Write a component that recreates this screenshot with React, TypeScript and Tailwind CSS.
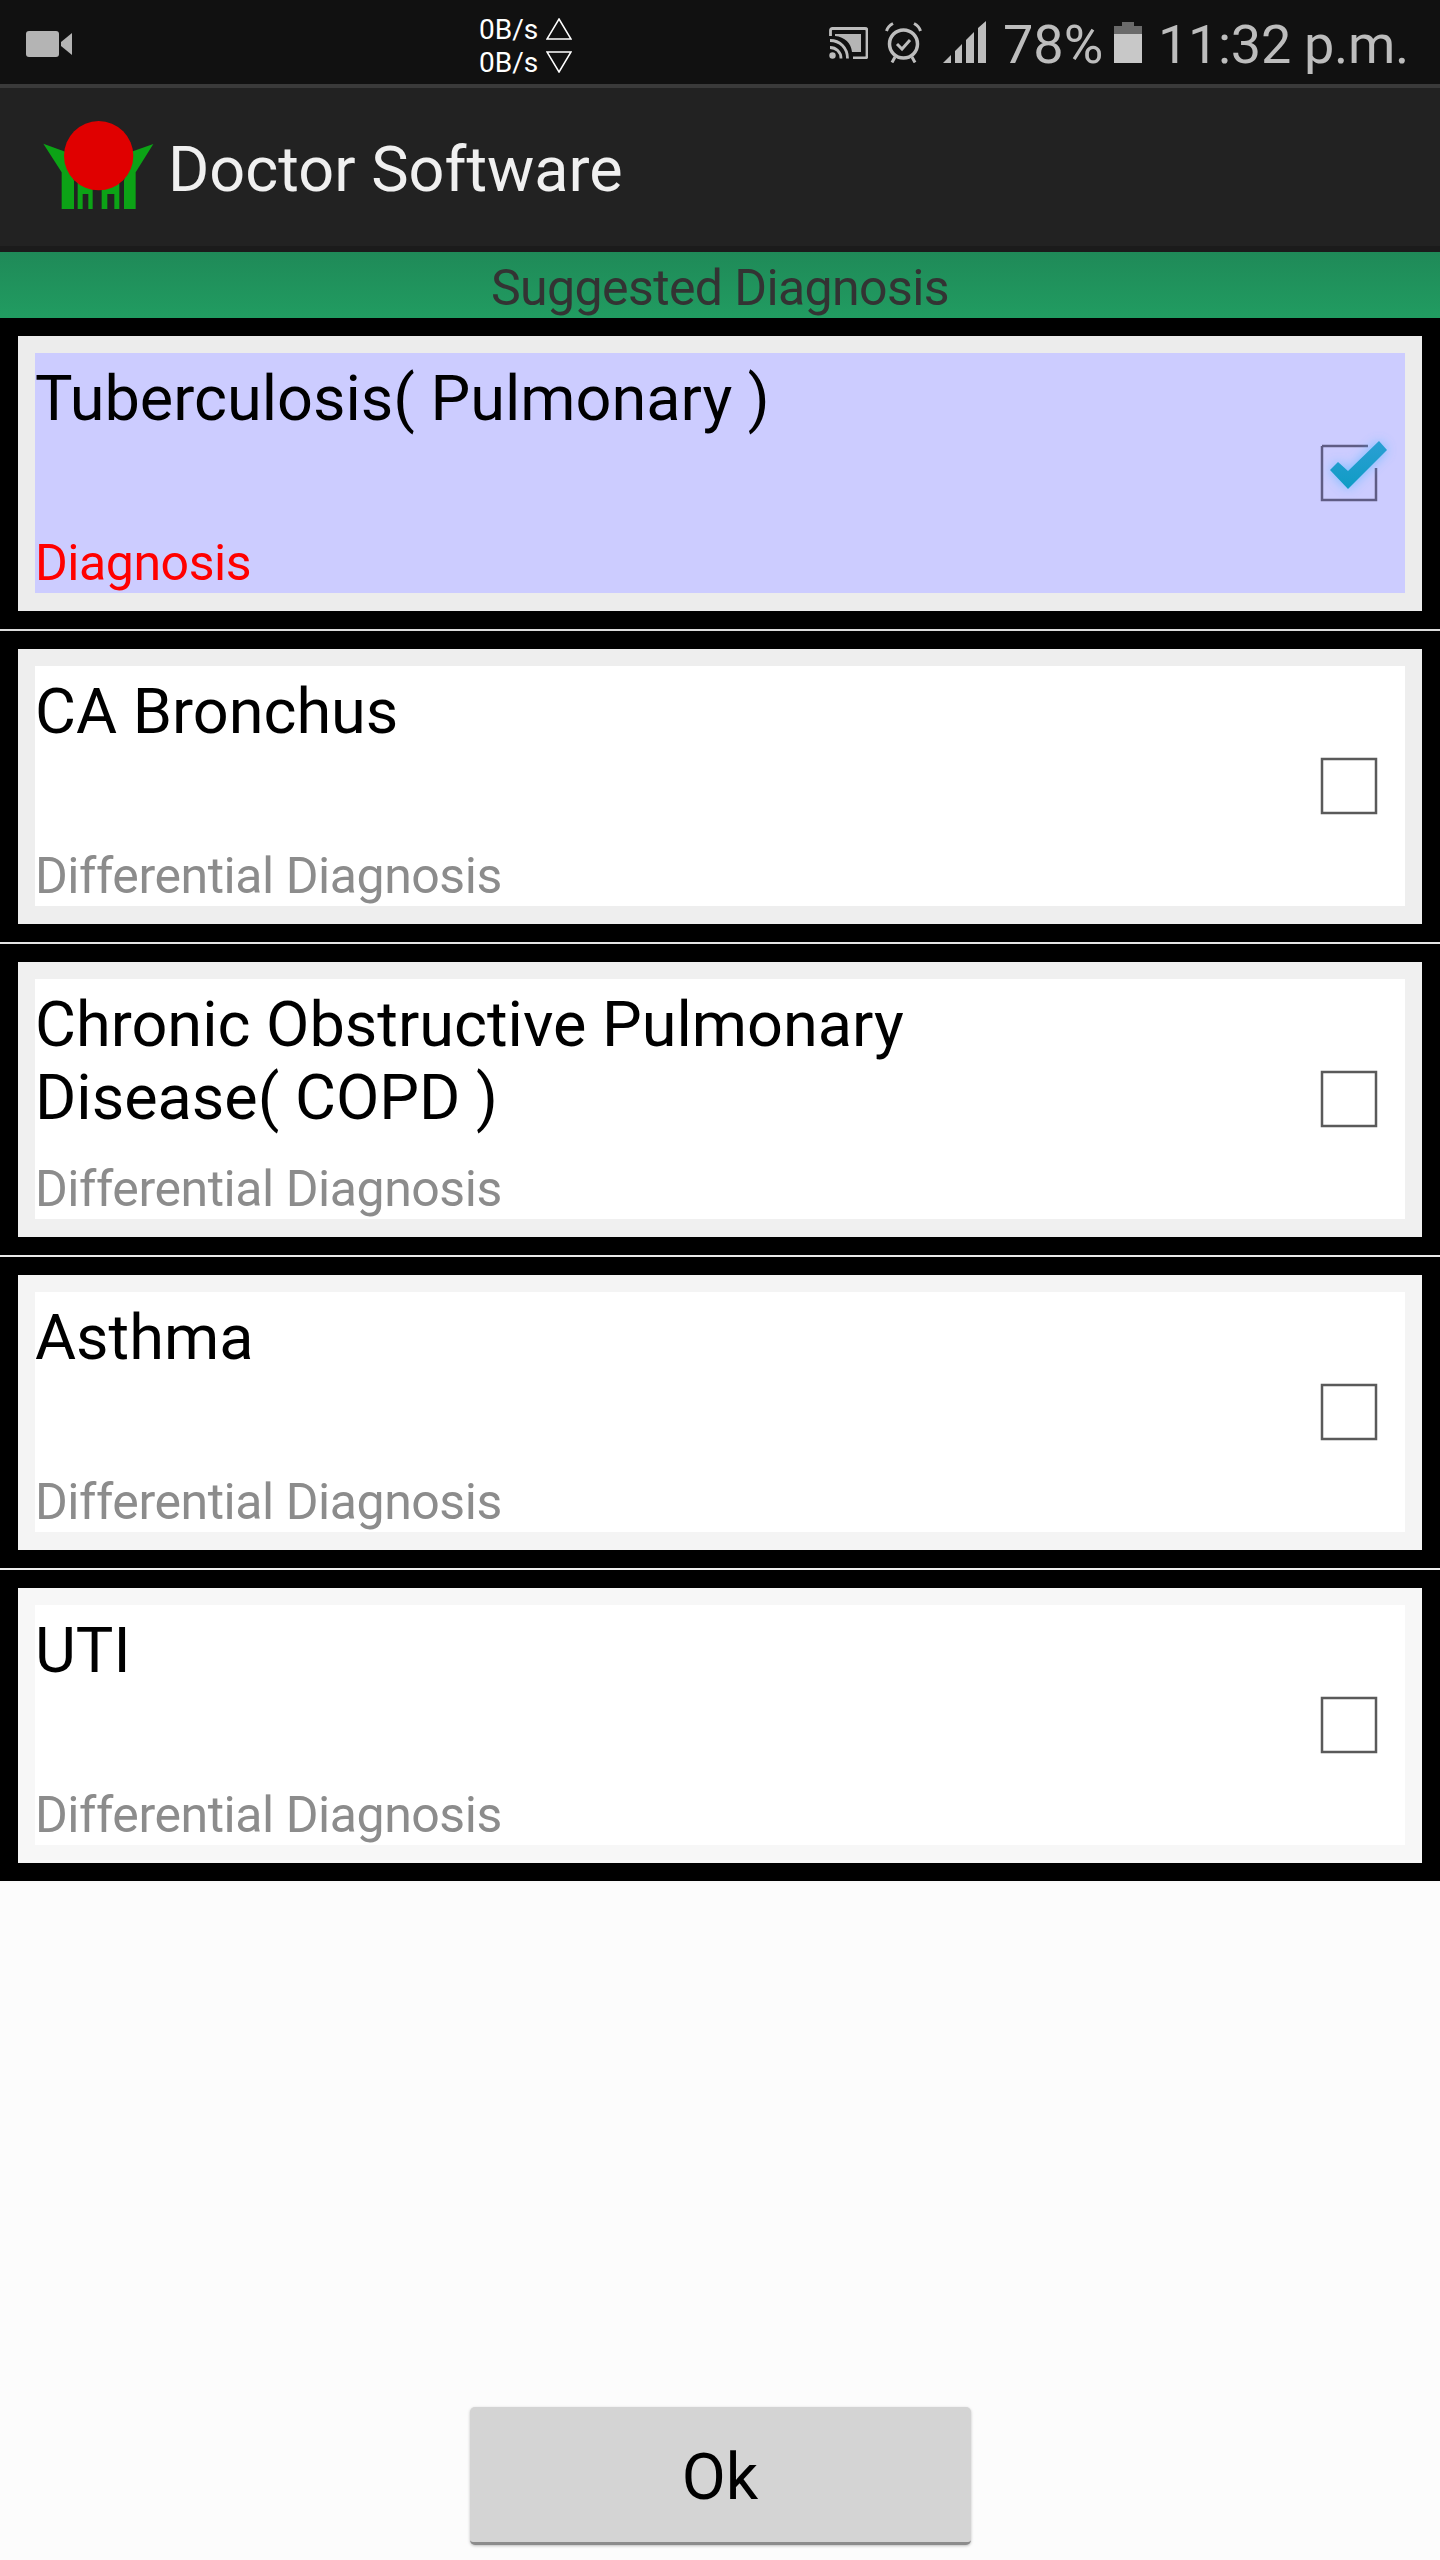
import { useId } from 'react'

const diagnoses = [
  { name: 'Tuberculosis( Pulmonary )', kind: 'Diagnosis', checked: true, frame: 'bg-[#ececec]', line: 'border-[#dcdcdc]' },
  { name: 'CA Bronchus', kind: 'Differential Diagnosis', checked: false, frame: 'bg-[#eeeeee]', line: 'border-[#e4e4e4]' },
  { name: 'Chronic Obstructive Pulmonary Disease( COPD )', kind: 'Differential Diagnosis', checked: false, frame: 'bg-[#f0f0f0]', line: 'border-[#e8e8e8]' },
  { name: 'Asthma', kind: 'Differential Diagnosis', checked: false, frame: 'bg-[#f4f4f4]', line: 'border-[#eeeeee]' },
  { name: 'UTI', kind: 'Differential Diagnosis', checked: false, frame: 'bg-[#f7f7f7]', line: 'border-[#f9f9f9]' },
]

function Logo() {
  return (
    <svg viewBox="0 0 450 330" className="w-[150px] h-[110px] shrink-0 mb-[6px]">
      <path
        fill="#0ca316"
        d="M70 104 L140 130 L162 215 V300 H125 V190 Z M400 105 L330 130 L312 215 V300 H347 V190 Z M173 218 L218 235 V300 H205 V255 H188 V300 H173 Z M245 235 L298 218 V300 H283 V255 H262 V300 H245 Z"
      />
      <circle cx="236" cy="140" r="104" fill="#e00000" />
    </svg>
  )
}

function CheckBox({ checked }: { checked: boolean }) {
  const id = useId()
  return (
    <svg viewBox="0 0 56 56" className="w-[56px] h-[56px] shrink-0 overflow-visible">
      {checked ? (
        <>
          <defs>
            <filter id={id + 'b'} x="-50%" y="-50%" width="200%" height="200%">
              <feGaussianBlur stdDeviation="6" />
            </filter>
            <linearGradient id={id + 'g'} x1="0" y1="0" x2="0" y2="1">
              <stop offset="0" stopColor="#2b9fd4" />
              <stop offset="1" stopColor="#0f9cc4" />
            </linearGradient>
          </defs>
          <path d="M1 1 H47 M55 23 V55 H1 V1" fill="none" stroke="#5f5c84" strokeWidth="2.5" />
          <path d="M9 25 L17 17 L27 26 L58 -4 L66 5 L27 44 Z" fill="#5ab8ff" opacity="0.75" filter={`url(#${id}b)`} />
          <path d="M9 25 L17 17 L27 26 L58 -4 L66 5 L27 44 Z" fill={`url(#${id}g)`} />
        </>
      ) : (
        <rect x="1" y="1" width="54" height="54" fill="none" stroke="#5a5a5a" strokeWidth="2.5" />
      )}
    </svg>
  )
}

type RowProps = { name: string; kind: string; checked: boolean; frame: string; line: string }

function DiagnosisRow({ name, kind, checked, frame, line }: RowProps) {
  return (
    <div className={`h-[313px] bg-black border-b-2 ${line} p-[18px]`}>
      <div className={`h-[275px] p-[17px] ${frame}`}>
        <div className={`h-[240px] flex items-center justify-between pr-[28px] ${checked ? 'bg-[#ccccff]' : 'bg-white'}`}>
          <div className="w-[1040px] h-full flex flex-col justify-between pt-[9px]">
            <div className="text-[63px] leading-[73px] text-black">{name}</div>
            <div className={`text-[50px] leading-[59px] tracking-[-0.45px] ${checked ? 'text-[#ff0000]' : 'text-[#8c8c8c]'}`}>{kind}</div>
          </div>
          <CheckBox checked={checked} />
        </div>
      </div>
    </div>
  )
}

function StatusBar() {
  return (
    <div className="h-[88px] bg-[#111111] border-b-4 border-[#3a3a3a] flex items-center pl-[26px] pr-[31px] text-[#bdbdbd]">
      <svg viewBox="0 0 46 26" className="w-[46px] h-[26px] shrink-0 mt-[4px]">
        <rect x="0" y="0" width="33" height="26" rx="3" fill="#b4b4b4" />
        <path d="M35 11 L46 2 V24 L35 15 Z" fill="#b4b4b4" />
      </svg>
      <div className="ml-[407px] mt-[7px] flex flex-col text-[28px] leading-[33px] text-white w-[100px]">
        <div className="flex items-center gap-[8px]">
          0B/s
          <svg viewBox="0 0 26 22" className="w-[26px] h-[22px]">
            <path d="M13 1 L25 21 H1 Z" fill="none" stroke="#fff" strokeWidth="1.5" />
          </svg>
        </div>
        <div className="flex items-center gap-[8px]">
          0B/s
          <svg viewBox="0 0 26 22" className="w-[26px] h-[22px]">
            <path d="M13 21 L25 1 H1 Z" fill="none" stroke="#fff" strokeWidth="1.5" />
          </svg>
        </div>
      </div>
      <div className="ml-auto flex items-center">
        <svg viewBox="0 0 39 32" className="w-[39px] h-[32px] mr-[17px] mt-[2px]">
          <path d="M1.5 9 V3.5 Q1.5 1.5 3.5 1.5 H36 Q38 1.5 38 3.5 V29 Q38 31 36 31 H24" fill="none" stroke="#bdbdbd" strokeWidth="2.8" />
          <path d="M6 7 H32 V25 H23 C22 16 16 10 6 9 Z" fill="#b5b5b5" />
          <path d="M1 13.5 C11 13.5 18.5 21 18.5 31.5 M1 20.5 C7 20.5 12 25 12 31.5" fill="none" stroke="#bdbdbd" strokeWidth="2.8" />
          <circle cx="3.5" cy="28.5" r="3.2" fill="#bdbdbd" />
        </svg>
        <svg viewBox="0 0 37 41" className="w-[37px] h-[41px] mr-[21px]">
          <circle cx="18.5" cy="22" r="14" fill="none" stroke="#bdbdbd" strokeWidth="3.5" />
          <path d="M12 22 L17 27 L25 18" fill="none" stroke="#bdbdbd" strokeWidth="3" />
          <path d="M1.5 9 Q3 4 8 1.5 M35.5 9 Q34 4 29 1.5 M10 35 L7 40.5 M27 35 L30 40.5" fill="none" stroke="#bdbdbd" strokeWidth="3" />
        </svg>
        <svg viewBox="0 0 43 42" className="w-[43px] h-[42px] mr-[17px]">
          <path d="M0 42 L8 34 V42 Z M12 42 V30 L19 23 V42 Z M23 42 V19 L31 11 V42 Z M35 42 V7 L43 0 V42 Z" fill="#bdbdbd" />
        </svg>
        <span className="text-[54px] leading-none w-[96px] mt-[6px]">78%</span>
        <svg viewBox="0 0 28 41" className="w-[28px] h-[41px] ml-[15px] mr-[16px]">
          <path d="M8 0 H20 V4 H28 V12 H0 V4 H8 Z" fill="#6a6a6a" />
          <rect x="0" y="12" width="28" height="29" fill="#c8c8c8" />
        </svg>
        <span className="text-[54px] leading-none tracking-[-0.3px] mt-[6px]">11:32 p.m.</span>
      </div>
    </div>
  )
}

export default function App() {
  return (
    <div className="w-[1440px] h-[2560px] flex flex-col bg-[#fcfcfc] font-['Roboto',sans-serif]">
      <StatusBar />

      {/* Action bar */}
      <div className="h-[164px] bg-[#222222] border-b-[6px] border-[#1b1b1b] flex items-center pl-[20px]">
        <Logo />
        <span className="text-[63px] text-[#f0f0f0] -ml-[2px] mt-[6px]">Doctor Software</span>
      </div>

      <div className="h-[66px] bg-gradient-to-b from-[#1f8a58] to-[#219c61] flex items-center justify-center text-[50px] leading-none tracking-[-0.6px] text-[#333333] pt-[6px]">
        Suggested Diagnosis
      </div>

      {diagnoses.map((d) => (
        <DiagnosisRow key={d.name} {...d} />
      ))}

      <div className="flex-1 flex items-end justify-center pb-[15px]">
        <button className="w-[501px] h-[138px] bg-[#d4d4d4] rounded-[5px] border-b-[3px] border-[#8c8c8c] shadow-[0_1px_3px_rgba(0,0,0,0.25)] text-[64px] text-black pt-[6px]">
          Ok
        </button>
      </div>
    </div>
  )
}
